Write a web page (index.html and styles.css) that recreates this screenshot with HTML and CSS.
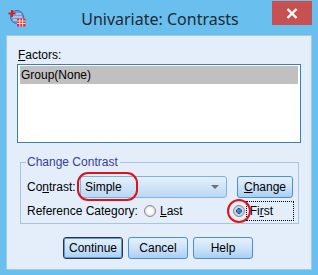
FILE: index.html
```html
<!DOCTYPE html>
<html lang="en">
  <head>
    <meta charset="UTF-8" />
    <title>Univariate: Contrasts</title>
    <link rel="stylesheet" href="styles.css">
  </head>
  <body>
    <div class="titlebar">
      <svg class="app-icon" width="18" height="18" viewBox="0 0 18 18">
        <circle cx="9" cy="8" r="6.5" fill="#6d9fd6" stroke="#3d6fae" stroke-width="1" />
        <path d="M5 5h8M4 8h10M5 11h8" stroke="#d8e8f8" stroke-width="1" />
        <path d="M4 1v7M0.5 4.5h7" stroke="#e01b24" stroke-width="2" />
        <rect x="9" y="9.5" width="8.5" height="8" fill="#e0303a" />
        <path d="M9 12h8.5M9 14.5h8.5M11.8 9.5v8M14.6 9.5v8" stroke="#ffd6d8" stroke-width="1" />
      </svg>
      <div class="title">Univariate: Contrasts</div>
      <div class="close">
        <svg width="12" height="11" viewBox="0 0 12 11">
          <path d="M1.5 1l9 9M10.5 1l-9 9" stroke="#fff" stroke-width="2.4" />
        </svg>
      </div>
    </div>

    <div class="client">
      <div class="label"><u>F</u>actors:</div>
      <div class="listbox">
        <div class="item selected">Group(None)</div>
      </div>

      <fieldset class="group">
        <legend>Change Contrast</legend>
        <div class="row contrast-row">
          <span class="row-label">Co<u>n</u>trast:</span>
          <div class="combo">
            <span>Simple</span>
            <span class="arrow"></span>
            <span class="mark mark-combo"></span>
          </div>
          <button class="btn change"><u>C</u>hange</button>
        </div>
        <div class="row ref-row">
          <span class="ref-label">Reference Category:</span>
          <span class="radio">
            <span class="dot"></span>
            <span><u>L</u>ast</span>
          </span>
          <span class="radio first">
            <span class="dot checked">
              <span class="mark mark-radio"></span>
            </span>
            <span class="focus">Fi<u>r</u>st</span>
          </span>
        </div>
      </fieldset>

      <div class="actions">
        <button class="btn default">Continue</button>
        <button class="btn">Cancel</button>
        <button class="btn">Help</button>
      </div>
    </div>
  </body>
</html>
```

FILE: styles.css
```css
* {
  box-sizing: border-box;
}
body {
  margin: 0;
  width: 318px;
  height: 275px;
  background: #69bfee;
  font-family: "Liberation Sans", Arial, sans-serif;
  font-size: 12px;
  color: #000;
  overflow: hidden;
}
.titlebar {
  height: 35px;
  display: grid;
  grid-template-columns: 1fr auto 1fr;
  padding: 0 6px 0 8px;
}
.app-icon {
  margin-top: 9px;
}
.title {
  font-family: "Noto Sans", "Open Sans", sans-serif;
  font-size: 16px;
  color: #1f2a33;
  line-height: 35px;
  padding-top: 2px;
}
.close {
  justify-self: end;
  margin-top: 1px;
  width: 40px;
  height: 24px;
  background: #c75050;
  display: flex;
  align-items: center;
  justify-content: center;
}
.client {
  margin: 0 6px;
  height: 235px;
  background: #e3eefa;
  border: 1px solid #9fcbea;
  padding: 12px 10px 0 10px;
}
.label {
  line-height: 15px;
  height: 15px;
  padding-left: 1px;
}
.listbox {
  margin-top: 1px;
  width: 284px;
  height: 79px;
  background: #fff;
  border: 1px solid #3c7fb1;
  padding: 1px 2px;
}
.item {
  height: 18px;
  line-height: 18px;
  padding-left: 1px;
}
.selected {
  background: #c0c0c0;
}
.group {
  margin: 12px 0 0 3px;
  width: 278px;
  border: 1px solid #a9c4de;
  padding: 7px 4px 2px 6px;
}
.group legend {
  padding: 0 2px 0 1px;
  margin-left: -1px;
  line-height: 14px;
  color: #3b3b9e;
}
.row {
  display: flex;
  align-items: center;
}
.contrast-row {
  height: 22px;
}
.row-label {
  width: 53px;
}
.combo {
  position: relative;
  width: 147px;
  height: 22px;
  border: 1px solid #7db2e6;
  border-radius: 3px;
  background: linear-gradient(#e6f1fc, #cfe4f8 50%, #bcd8f4);
  padding-left: 4px;
  line-height: 20px;
}
.arrow {
  position: absolute;
  right: 7px;
  top: 8px;
  border-left: 4px solid transparent;
  border-right: 4px solid transparent;
  border-top: 4px solid #6f6f6f;
}
.mark {
  position: absolute;
  border: 2px solid #e3101a;
  pointer-events: none;
}
.mark-combo {
  left: -4px;
  top: -5px;
  width: 61px;
  height: 29px;
  border-radius: 11px;
}
.btn {
  font-family: "Liberation Sans", Arial, sans-serif;
  font-size: 12px;
  color: #000;
  width: 60px;
  height: 22px;
  padding: 0;
  border: 1px solid #4a90d4;
  border-radius: 3px;
  background: linear-gradient(#e4f0fc, #cde3f8 50%, #a9cff3);
}
.change {
  width: 56px;
  margin-left: 10px;
}
.default {
  border-color: #2d3640;
  box-shadow: inset 0 0 0 1px #5a9ee0;
}
.ref-row {
  margin-top: 2px;
  height: 21px;
}
.ref-label {
  width: 117px;
}
.radio {
  display: flex;
  align-items: center;
  gap: 4px;
}
.dot {
  position: relative;
  width: 12px;
  height: 12px;
  border-radius: 50%;
  border: 1px solid #8c8c8c;
  background: radial-gradient(circle, #fff 35%, #d3d3d3 80%);
}
.dot.checked {
  background: radial-gradient(circle, #3b82d6 28%, #1c4f94 36%, #dcdcdc 44%, #c4c4c4 80%);
}
.mark-radio {
  left: -7px;
  top: -7px;
  width: 24px;
  height: 24px;
  border-radius: 50%;
}
.first {
  margin-left: 50px;
  gap: 1px;
}
.focus {
  border: 1px dotted #000;
  width: 48px;
  height: 20px;
  line-height: 18px;
  padding-left: 3px;
}
.actions {
  margin-top: 13px;
  display: flex;
  justify-content: center;
  gap: 5px;
  padding-right: 2px;
}
```
